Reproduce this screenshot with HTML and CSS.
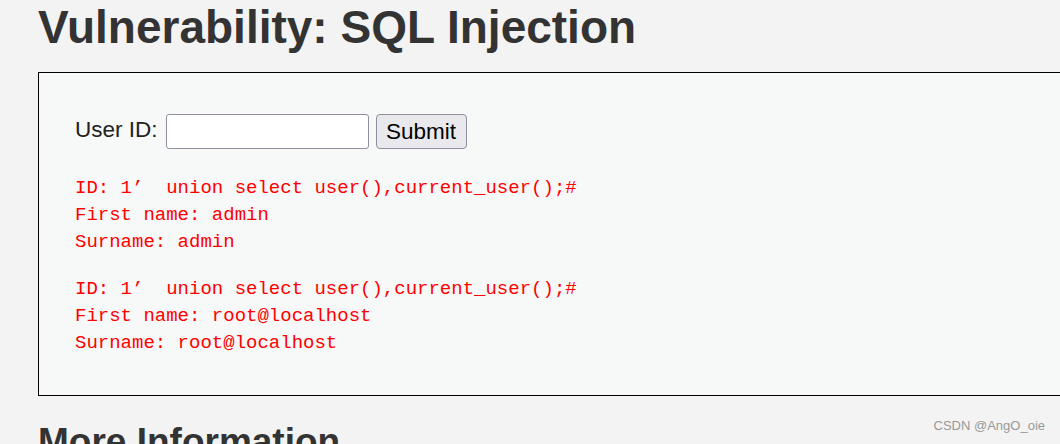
FILE: index.html
```html
<!DOCTYPE html>
<html lang="en">
<head>
  <meta charset="UTF-8">
  <title>Vulnerability: SQL Injection</title>
  <link rel="stylesheet" href="styles.css">
</head>
<body>

<div id="main">
  <h1>Vulnerability: SQL Injection</h1>

  <div class="vulnerable_code_area">
    <form class="user-form">
      <label for="id">User ID:</label>
      <input type="text" id="id" name="id">
      <button type="button">Submit</button>
    </form>
<pre>ID: 1’  union select user(),current_user();#
First name: admin
Surname: admin</pre>
<pre>ID: 1’  union select user(),current_user();#
First name: root@localhost
Surname: root@localhost</pre>
  </div>

  <h2>More Information</h2>
</div>

<div class="watermark">CSDN @AngO_oie</div>

</body>
</html>
```

FILE: styles.css
```css
html, body {
  height: 100%;
}

body {
  margin: 0;
  padding-top: 1px;
  background: #f3f3f3;
  font-family: "Liberation Sans", Arial, sans-serif;
  color: #333;
  overflow: hidden;
  box-sizing: border-box;
}

#main {
  padding-left: 38px;
}

h1 {
  margin: 0 0 19px;
  font-size: 46px;
  line-height: 52px;
  font-weight: bold;
  color: #333;
}

.vulnerable_code_area {
  border: 1px solid #000;
  background: #f7f8f8;
  margin-right: -40px;
  padding: 41px 0 38px 36px;
}

.user-form {
  display: flex;
  align-items: center;
  height: 35px;
  margin-bottom: 26px;
}

.user-form label {
  font-size: 22.5px;
  color: #222;
  margin-right: 8px;
  position: relative;
  top: -2px;
}

.user-form input {
  width: 203px;
  height: 35px;
  box-sizing: border-box;
  border: 1px solid #8f8f9d;
  border-radius: 3px;
  background: #fff;
  margin: 0 7px 0 0;
  padding: 0 4px;
}

.user-form button {
  height: 35px;
  width: 91px;
  box-sizing: border-box;
  border: 1px solid #8f8f9d;
  border-radius: 4px;
  background: #e9e9ed;
  font-family: "Liberation Sans", Arial, sans-serif;
  font-size: 22.5px;
  color: #000;
  padding: 0;
}

pre {
  margin: 0 0 20px;
  font-family: "Liberation Mono", "Courier New", monospace;
  font-size: 19px;
  line-height: 27px;
  color: #ff0000;
}

pre:last-child {
  margin-bottom: 0;
}

h2 {
  margin: 25px 0 0;
  font-size: 37px;
  line-height: 42px;
  font-weight: bold;
  color: #333;
}

.watermark {
  position: absolute;
  right: 15px;
  top: 418px;
  font-size: 13px;
  color: #999;
}
```
